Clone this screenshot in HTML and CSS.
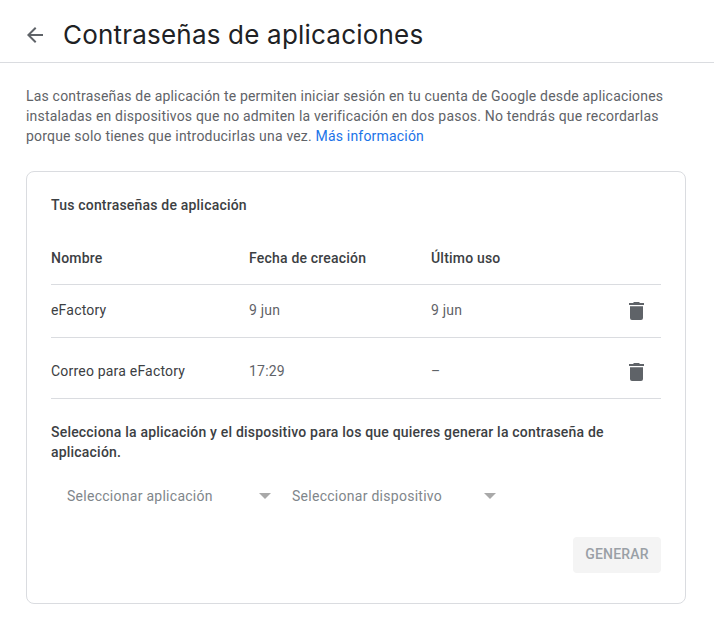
FILE: index.html
```html
<!DOCTYPE html>
<html lang="es">
<head>
    <meta charset="UTF-8">
    <title>Contraseñas de aplicaciones</title>
    <link rel="stylesheet" href="styles.css">
</head>
<body>
    <header class="page-header">
        <svg class="back-icon" viewBox="0 0 24 24" width="24" height="24">
            <path d="M20 11H7.83l5.59-5.59L12 4l-8 8 8 8 1.41-1.41L7.83 13H20v-2z"/>
        </svg>
        <h1>Contraseñas de aplicaciones</h1>
    </header>

    <main class="content">
        <p class="intro">Las contraseñas de aplicación te permiten iniciar sesión en tu cuenta de Google desde aplicaciones instaladas en dispositivos que no admiten la verificación en dos pasos. No tendrás que recordarlas porque solo tienes que introducirlas una vez. <a href="#">Más información</a></p>

        <section class="card">
            <h2>Tus contraseñas de aplicación</h2>

            <div class="row row-head">
                <span class="col-name">Nombre</span>
                <span class="col-date">Fecha de creación</span>
                <span class="col-used">Último uso</span>
            </div>
            <div class="row row-first">
                <span class="col-name">eFactory</span>
                <span class="col-date">9 jun</span>
                <span class="col-used">9 jun</span>
                <svg class="trash" viewBox="0 0 15 18"><path d="M5 0h5l1 1h4v2H0V1h4zM1 4.200h13V16a2 2 0 0 1-2 2H3a2 2 0 0 1-2-2z"/></svg>
            </div>
            <div class="row row-second">
                <span class="col-name">Correo para eFactory</span>
                <span class="col-date">17:29</span>
                <span class="col-used">–</span>
                <svg class="trash" viewBox="0 0 15 18"><path d="M5 0h5l1 1h4v2H0V1h4zM1 4.200h13V16a2 2 0 0 1-2 2H3a2 2 0 0 1-2-2z"/></svg>
            </div>

            <p class="select-help">Selecciona la aplicación y el dispositivo para los que quieres generar la contraseña de aplicación.</p>

            <div class="selects">
                <div class="select select-app"><span>Seleccionar aplicación</span><i class="arrow"></i></div>
                <div class="select select-device"><span>Seleccionar dispositivo</span><i class="arrow"></i></div>
            </div>

            <div class="actions">
                <button class="btn" disabled>GENERAR</button>
            </div>
        </section>
    </main>
</body>
</html>
```

FILE: styles.css
```css
* {
    margin: 0;
    padding: 0;
    box-sizing: border-box;
}

body {
    background: white;
    font-family: Roboto, sans-serif;
    font-size: 14px;
    color: #3c4043;
    overflow: hidden;
}

.page-header {
    display: flex;
    align-items: center;
    height: 63px;
    padding: 7px 0 0 23px;
    border-bottom: 1px solid #dadce0;
}

.back-icon {
    fill: #5f6368;
    margin-top: 1px;
    margin-right: 16px;
}

h1 {
    font-family: Inter, sans-serif;
    font-size: 26px;
    font-weight: 400;
    letter-spacing: 0.2px;
    color: #202124;
}

.content {
    padding: 23px 28px 0 26px;
}

.intro {
    line-height: 20px;
    letter-spacing: 0.19px;
    color: #5f6368;
}

.intro a {
    color: #1a73e8;
    text-decoration: none;
}

.card {
    height: 433px;
    margin-top: 25px;
    padding: 23px 24px 0 24px;
    border: 1px solid #dadce0;
    border-radius: 8px;
}

h2 {
    font-size: 14px;
    font-weight: 500;
    line-height: 20px;
    letter-spacing: 0.2px;
}

.row {
    display: flex;
    align-items: center;
    border-bottom: 1px solid #dadce0;
    letter-spacing: 0.2px;
}

.row-head {
    height: 70px;
    padding-top: 17px;
    font-weight: 500;
}

.row-first {
    height: 53px;
    padding-bottom: 2px;
}

.row-second {
    height: 61px;
    padding-top: 6px;
}

.col-name {
    width: 198px;
}

.col-date {
    width: 182px;
}

.row-first .col-date,
.row-first .col-used,
.row-second .col-date,
.row-second .col-used {
    color: #5f6368;
}

.trash {
    width: 15px;
    height: 18px;
    fill: #5f6368;
    margin-top: 2px;
    margin-left: auto;
    margin-right: 17px;
}

.select-help {
    margin-top: 23px;
    font-weight: 500;
    line-height: 20px;
    letter-spacing: 0.2px;
}

.selects {
    display: flex;
    margin-top: 24px;
}

.select {
    display: flex;
    align-items: center;
    justify-content: space-between;
    height: 20px;
    letter-spacing: 0.27px;
    color: #80868b;
}

.select-app {
    width: 220px;
    padding-left: 16px;
}

.select-device {
    width: 204px;
    margin-left: 21px;
}

.arrow {
    width: 0;
    height: 0;
    border-left: 6px solid transparent;
    border-right: 6px solid transparent;
    border-top: 6px solid #a9a9a9;
}

.actions {
    display: flex;
    justify-content: flex-end;
    margin-top: 31px;
}

.btn {
    width: 88px;
    height: 36px;
    padding-bottom: 2px;
    background-color: #f4f4f4;
    color: #9aa0a6;
    border: none;
    border-radius: 4px;
    font-family: Roboto, sans-serif;
    font-size: 14px;
    font-weight: 500;
    letter-spacing: 0.2px;
}
```
